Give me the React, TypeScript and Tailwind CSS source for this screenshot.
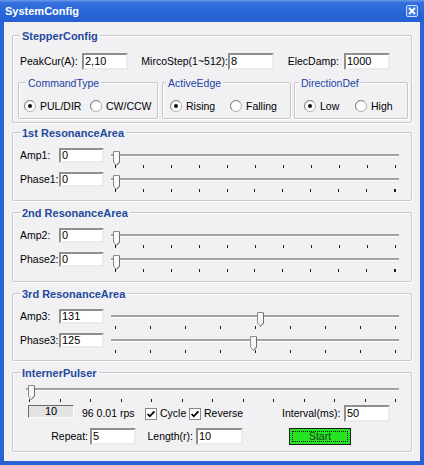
import React from "react";

function Field({ value, className = "" }: { value: string; className?: string }) {
  return (
    <div
      className={`bg-white border-2 border-t-[#8e8e8e] border-l-[#8e8e8e] border-r-[#ebebeb] border-b-[#ebebeb] flex items-center pl-[1px] text-[11px] leading-none text-black overflow-hidden shrink-0 ${className}`}
    >
      {value}
    </div>
  );
}

function Group({
  title,
  bold = true,
  className = "",
  titleLeft = "left-[7px]",
  children,
}: {
  title: string;
  bold?: boolean;
  className?: string;
  titleLeft?: string;
  children?: React.ReactNode;
}) {
  return (
    <div
      className={`relative shrink-0 border border-[#c6c6ca] rounded-[2px] shadow-[inset_1px_1px_0_#ffffff,1px_1px_0_#ffffff] ${className}`}
    >
      <span
        className={`absolute top-0 -translate-y-1/2 bg-[#f1f1f4] px-[2px] leading-[13px] whitespace-nowrap ${titleLeft} ${
          bold ? "font-bold text-[11px] text-[#24499b]" : "text-[10.5px] text-[#1d3fa2]"
        }`}
      >
        {title}
      </span>
      {children}
    </div>
  );
}

function Radio({ checked = false, label, className = "" }: { checked?: boolean; label: string; className?: string }) {
  return (
    <div className={`flex items-center gap-[4px] shrink-0 ${className}`}>
      <svg width="12" height="12" viewBox="0 0 12 12" className="shrink-0">
        <circle cx="6" cy="6" r="5.5" fill="#ffffff" stroke="#b0b0b0" />
        <path d="M2.11 9.89 A5.5 5.5 0 0 1 9.89 2.11" fill="none" stroke="#8a8a8a" />
        {checked && <circle cx="6" cy="6" r="2" fill="#111111" />}
      </svg>
      <span className="leading-none whitespace-nowrap">{label}</span>
    </div>
  );
}

function Check({ label, className = "" }: { label: string; className?: string }) {
  return (
    <div className={`flex items-center gap-[3px] shrink-0 ${className}`}>
      <svg width="12" height="12" viewBox="0 0 12 12" className="shrink-0">
        <rect x="0.5" y="0.5" width="11" height="11" fill="#ffffff" stroke="#8a8a8a" />
        <path d="M2.6 6 L4.8 8.3 L9.4 3.3" fill="none" stroke="#000000" strokeWidth="1.8" />
      </svg>
      <span className="leading-none whitespace-nowrap">{label}</span>
    </div>
  );
}

function Slider({
  className = "",
  ticks,
  frac,
  inset = 4,
  boldLast = false,
}: {
  className?: string;
  ticks: number;
  frac: number;
  inset?: number;
  boldLast?: boolean;
}) {
  const items = Array.from({ length: ticks });
  return (
    <div className={`relative h-[17px] shrink-0 flex flex-col ${className}`}>
      <div className="mt-[3px] h-[2px] bg-[#a2a2a2]" />
      <div className="h-[1px] bg-white" />
      <div
        className={`mt-[8px] flex justify-between pr-[3px] ${inset === 4 ? "pl-[4px]" : "pl-[3px]"}`}
      >
        {items.map((_, i) => (
          <div
            key={i}
            className={`h-[3px] bg-[#1e1e1e] ${boldLast && i === ticks - 1 ? "w-[2px]" : "w-[1px]"}`}
          />
        ))}
      </div>
      <svg
        width="7"
        height="15"
        viewBox="0 0 7 15"
        className="absolute top-0"
        style={{ left: `calc(${inset}px + ${frac} * (100% - ${inset + 4}px) - 2px)` }}
      >
        <path d="M0.5 0.5 H6.5 V11 L3.5 14.5 L0.5 11 Z" fill="#f8f8f8" stroke="#8c8c8c" />
        <path d="M6.5 1 V11 L3.5 14.5" fill="none" stroke="#6e6e6e" />
      </svg>
    </div>
  );
}

function ResRow({
  label,
  value,
  ticks,
  frac,
  boldLast = false,
}: {
  label: string;
  value: string;
  ticks: number;
  frac: number;
  boldLast?: boolean;
}) {
  return (
    <div className="flex items-start h-[24px]">
      <span className="w-[39px] leading-[15px] shrink-0">{label}</span>
      <Field value={value} className="w-[45px] h-[15px]" />
      <Slider className="ml-[7px] mt-[3px] w-[288px]" ticks={ticks} frac={frac} boldLast={boldLast} />
    </div>
  );
}

export default function App() {
  return (
    <div className="w-[424px] h-[465px] bg-[#2a61d5] flex flex-col font-['Liberation_Sans',Arial,sans-serif] text-[10.5px] text-black overflow-hidden">
      {/* Title bar */}
      <div className="h-[22px] shrink-0 flex items-center justify-between pl-[5px] pr-[6px] bg-[linear-gradient(180deg,#6c9cec_0%,#3470dd_12%,#2966d8_55%,#2460d3_100%)]">
        <span className="text-white font-bold text-[11px] leading-none">SystemConfig</span>
        <div className="w-[12px] h-[12px] rounded-[2px] border border-[#c9dcfa] bg-[#3e7be4] flex items-center justify-center">
          <svg width="8" height="8" viewBox="0 0 8 8">
            <path d="M1 1 L7 7 M7 1 L1 7" stroke="#ffffff" strokeWidth="1.8" />
          </svg>
        </div>
      </div>

      {/* Body */}
      <div className="mx-[4px] h-[439px] shrink-0 bg-[#f1f1f4] flex flex-col px-[8px] pt-[13px]">
        {/* StepperConfig */}
        <Group title="StepperConfig" className="h-[88px]">
          <div className="flex items-center pl-[7px] pt-[17px]">
            <span className="w-[62px] shrink-0 whitespace-nowrap">PeakCur(A):</span>
            <Field value="2,10" className="w-[46px] h-[17px]" />
            <span className="w-[100px] shrink-0 text-right whitespace-nowrap">MircoStep(1~512):</span>
            <Field value="8" className="w-[46px] h-[17px]" />
            <span className="w-[70px] shrink-0 text-right pr-[5px] whitespace-nowrap">ElecDamp:</span>
            <Field value="1000" className="w-[46px] h-[17px]" />
          </div>
          <div className="flex pl-[5px] mt-[12px]">
            <Group title="CommandType" bold={false} className="w-[140px] h-[37px]" titleLeft="left-[7px]">
              <div className="flex items-center pl-[5px] pt-[17px]">
                <Radio checked label="PUL/DIR" className="w-[66px]" />
                <Radio label="CW/CCW" />
              </div>
            </Group>
            <Group title="ActiveEdge" bold={false} className="ml-[4px] w-[129px] h-[37px]" titleLeft="left-[3px]">
              <div className="flex items-center pl-[7px] pt-[17px]">
                <Radio checked label="Rising" className="w-[60px]" />
                <Radio label="Falling" />
              </div>
            </Group>
            <Group title="DirectionDef" bold={false} className="ml-[3px] w-[114px] h-[37px]" titleLeft="left-[4px]">
              <div className="flex items-center pl-[9px] pt-[17px]">
                <Radio checked label="Low" className="w-[51px]" />
                <Radio label="High" />
              </div>
            </Group>
          </div>
        </Group>

        {/* 1st */}
        <Group title="1st ResonanceArea" className="mt-[9px] h-[69px]">
          <div className="flex flex-col pl-[7px] pt-[15px]">
            <ResRow label="Amp1:" value="0" ticks={11} frac={0} />
            <ResRow label="Phase1:" value="0" ticks={11} frac={0} boldLast />
          </div>
        </Group>

        {/* 2nd */}
        <Group title="2nd ResonanceArea" className="mt-[11px] h-[70px]">
          <div className="flex flex-col pl-[7px] pt-[15px]">
            <ResRow label="Amp2:" value="0" ticks={11} frac={0} />
            <ResRow label="Phase2:" value="0" ticks={11} frac={0} boldLast />
          </div>
        </Group>

        {/* 3rd */}
        <Group title="3rd ResonanceArea" className="mt-[11px] h-[68px]">
          <div className="flex flex-col pl-[7px] pt-[15px]">
            <ResRow label="Amp3:" value="131" ticks={9} frac={131 / 255} />
            <ResRow label="Phase3:" value="125" ticks={9} frac={125 / 255} />
          </div>
        </Group>

        {/* InternerPulser */}
        <Group title="InternerPulser" className="mt-[11px] h-[80px]">
          <div className="flex flex-col pt-[12px]">
            <div className="pl-[13px]">
              <Slider className="w-[373px]" ticks={13} frac={0.004} inset={3} />
            </div>
            <div className="flex items-center h-[17px] mt-[3px] pl-[15px]">
              <div className="w-[46px] h-[13px] shrink-0 self-start bg-[#e3e3e3] border border-t-[#6a6a6a] border-l-[#6a6a6a] border-r-[#ffffff] border-b-[#ffffff] flex items-center justify-center text-[11px] leading-none">
                10
              </div>
              <span className="ml-[8px] w-[63px] shrink-0 whitespace-nowrap">96 0.01 rps</span>
              <Check label="Cycle" className="w-[44px]" />
              <Check label="Reverse" className="w-[93px]" />
              <span className="w-[62px] shrink-0 whitespace-nowrap">Interval(ms):</span>
              <Field value="50" className="w-[46px] h-[17px]" />
            </div>
            <div className="flex items-center h-[17px] mt-[6px]">
              <span className="w-[77px] shrink-0 text-right pr-[2px] whitespace-nowrap">Repeat:</span>
              <Field value="5" className="w-[46px] h-[17px]" />
              <span className="w-[60px] shrink-0 text-right pr-[3px] whitespace-nowrap">Length(r):</span>
              <Field value="10" className="w-[47px] h-[17px]" />
              <div className="ml-[46px] w-[62px] h-[17px] shrink-0 border border-[#1c1c1c] bg-[#24e424] p-[2px]">
                <div className="w-full h-full border border-dotted border-[#101010] flex items-center justify-center text-[10.5px] leading-none text-[#1b3d1b]">
                  Start
                </div>
              </div>
            </div>
          </div>
        </Group>
      </div>
    </div>
  );
}
